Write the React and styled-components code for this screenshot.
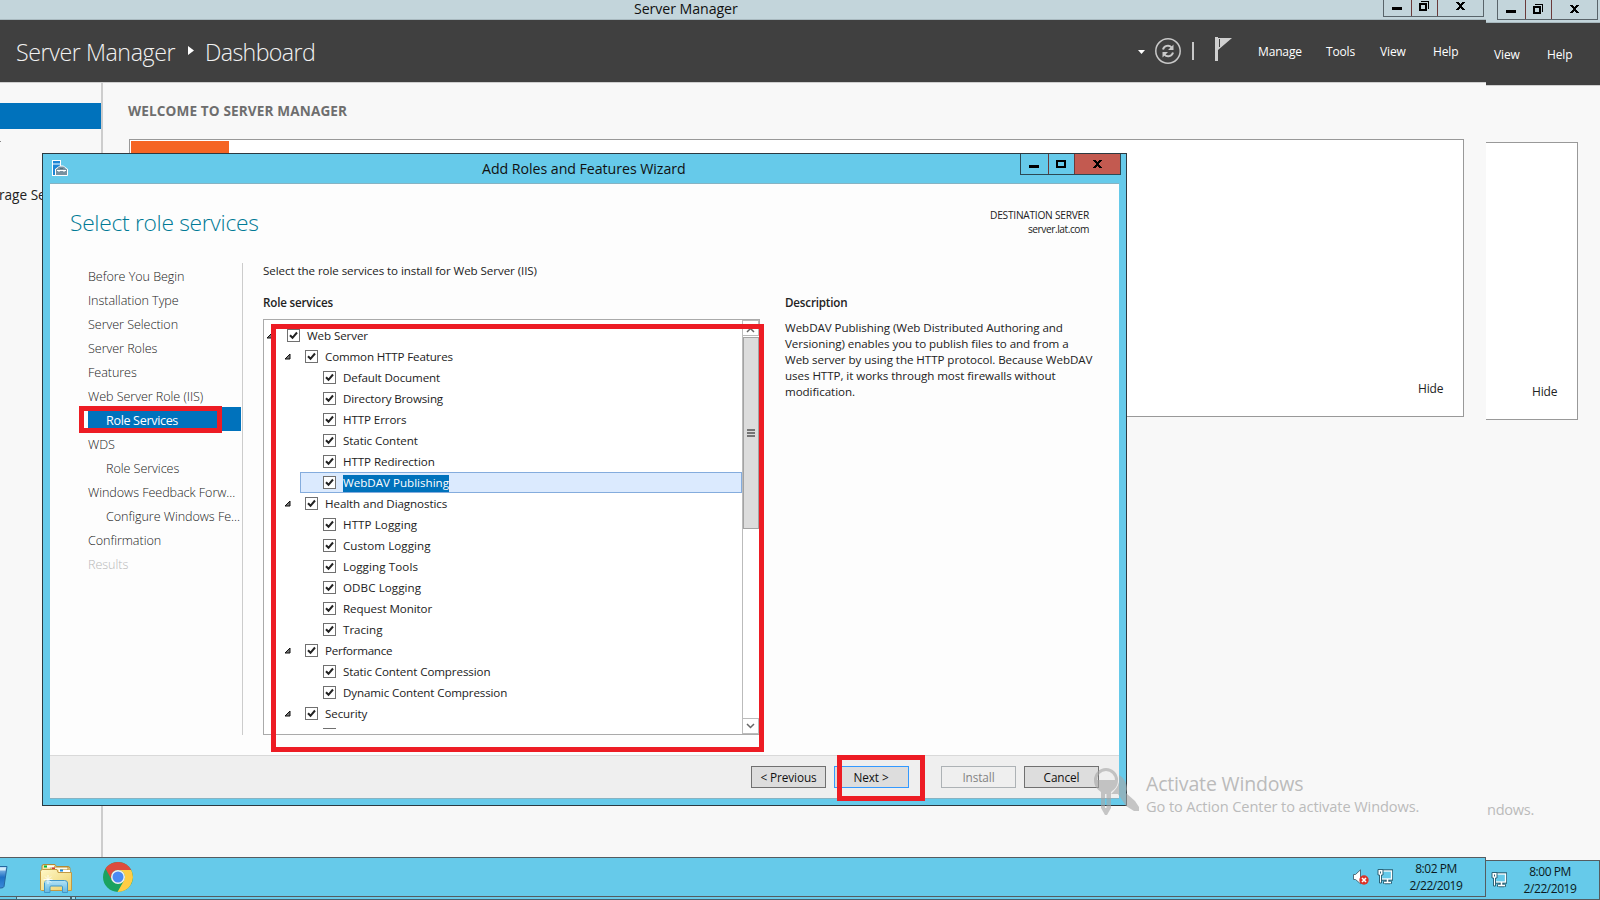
// src/pages/ServerManagerDesktop.jsx
import styled, { createGlobalStyle } from 'styled-components';

const GlobalStyle = createGlobalStyle`
  * {
    box-sizing: border-box;
  }
  body {
    margin: 0;
    overflow: hidden;
    font-family: 'Open Sans', 'Noto Sans', sans-serif;
    font-size: 11.6px;
    color: #222;
    white-space: nowrap;
  }
`;

const Desktop = styled.div`
  display: flex;
  width: 1600px;
  height: 900px;
  overflow: hidden;
  background: #f8f8f8;
`;

const FrontColumn = styled.div`
  display: flex;
  flex-direction: column;
  width: 1486px;
  height: 900px;
`;

const Screen = styled.div`
  display: flex;
  flex-direction: column;
  position: relative;
  width: ${(props) => props.$width}px;
  height: ${(props) => props.$height}px;
  overflow: hidden;
`;

const TitleBar = styled.div`
  display: flex;
  justify-content: flex-end;
  height: ${(props) => props.$height}px;
  padding-right: 2px;
  background: #c3d5db;
  border-bottom: 1px solid #a9b9bf;
`;

const TitleText = styled.div`
  flex: 1;
  padding-left: 634px;
  font-size: 14.2px;
  line-height: 17px;
  letter-spacing: -0.08px;
  color: #111;
`;

const CaptionButtons = styled.div`
  display: flex;
  height: ${(props) => props.$height}px;
  border: 1px solid ${(props) => props.$line};
  border-top: none;
`;

const CaptionButton = styled.div`
  display: flex;
  align-items: flex-end;
  justify-content: center;
  width: ${(props) => props.$width}px;
  padding-right: ${(props) => (props.$width < 40 ? 1 : 0)}px;
  padding-bottom: ${(props) => props.$pad}px;
  background: ${(props) => (props.$close ? '#c35a50' : 'transparent')};

  & + & {
    border-left: 1px solid ${(props) => props.$line};
  }
`;

const Header = styled.div`
  display: flex;
  align-items: center;
  height: 63px;
  background: #404040;
  border-bottom: 1px solid #cfcfcf;
  color: #fff;
`;

const Crumbs = styled.div`
  display: flex;
  align-items: center;
  flex: 1;
  padding-left: 16px;
  font-size: 23.2px;
  font-weight: 300;
  line-height: 60px;
  color: #f2f2f2;
`;

const Crumb = styled.span`
  width: ${(props) => props.$width}px;
  padding-top: 2px;
  letter-spacing: ${(props) => props.$spacing}px;
`;

const HeaderIcons = styled.div`
  display: flex;
  width: 120px;
  height: 62px;
`;

const MenuItem = styled.div`
  width: ${(props) => props.$width}px;
  padding-top: 1px;
  font-size: 12px;
  letter-spacing: -0.15px;
`;

const SliceMenu = styled.div`
  display: flex;
  padding-left: 8px;
`;

const Body = styled.div`
  display: flex;
  flex: 1;
`;

const Sidebar = styled.div`
  width: 103px;
  padding-top: 20px;
  border-right: 2px solid #cdcdcd;
`;

const SidebarCurrent = styled.div`
  height: 26px;
  background: #0072bc;
`;

const SidebarTick = styled.div`
  width: 1px;
  height: 1px;
  margin-top: 12px;
  background: #888;
`;

const SidebarItem = styled.div`
  margin: 43px 0 0 -1px;
  font-size: 13.6px;
  line-height: 20px;
`;

const Main = styled.div`
  flex: 1;
  padding: 18px 22px 0 26px;
`;

const Welcome = styled.div`
  height: 38px;
  margin-left: -1px;
  font-size: 13.6px;
  font-weight: 700;
  line-height: 20px;
  letter-spacing: 0.12px;
  color: #6e6e6e;
`;

const WelcomePanel = styled.div`
  display: flex;
  justify-content: space-between;
  height: 278px;
  padding: 1px 20px 0 1px;
  background: #fff;
  border: 1px solid #999;
`;

const OrangeTile = styled.div`
  width: 98px;
  height: 180px;
  background: #f56423;
`;

const HideLink = styled.div`
  align-self: flex-end;
  width: 25px;
  margin-bottom: 18px;
  font-size: 12px;
  line-height: 18px;
  letter-spacing: -0.15px;
`;

const SlicePanel = styled.div`
  display: flex;
  justify-content: flex-end;
  width: 92px;
  height: 278px;
  margin-top: 56px;
  padding-right: 20px;
  background: #fff;
  border: 1px solid #999;
  border-left: none;
`;

const SliceBody = styled.div`
  flex: 1;
`;

const Taskbar = styled.div`
  display: flex;
  align-items: flex-start;
  height: 40px;
  background: #66caea;
  border: 1px solid #555c60;
  border-left: none;
`;

const TaskIcons = styled.div`
  flex: 1;
  height: 38px;
`;

const TrayIcon = styled.div`
  width: ${(props) => props.$width}px;
  padding-top: 11px;
`;

const Clock = styled.div`
  width: 64px;
  margin-right: 17px;
  padding-top: 2px;
  font-size: 12px;
  line-height: 17px;
  letter-spacing: -0.45px;
  text-align: center;
  color: #0c1a20;
`;

const BottomStrip = styled.div`
  display: flex;
  height: 3px;
  padding-left: 16px;
  background: #66caea;
  border-bottom: 1px solid #46606b;
`;

const StripTask = styled.div`
  width: ${(props) => props.$width}px;
  height: 3px;
  background: #9adcf2;
  border: 1px solid #3f6572;
  border-top: none;
`;

// Windows activation notice, drawn over everything else on the screen
const Watermark = styled.div`
  position: absolute;
  left: 1092px;
  top: 766px;
  display: flex;
`;

const WatermarkText = styled.div`
  padding: 4px 0 0 7px;
  color: #bbb;
`;

const WatermarkTitle = styled.div`
  font-size: 19.5px;
  line-height: 27px;
  letter-spacing: -0.17px;
`;

const WatermarkLine = styled.div`
  font-size: 14.6px;
  line-height: 18px;
  letter-spacing: -0.1px;
`;

const SliceWatermark = styled(WatermarkLine)`
  position: absolute;
  left: 1px;
  top: 800px;
  letter-spacing: -0.3px;
  color: #bbb;
`;

const Wizard = styled.div`
  position: absolute;
  left: 42px;
  top: 153px;
  display: flex;
  flex-direction: column;
  width: 1085px;
  height: 653px;
  padding: 0 7px 6px;
  background: #66caea;
  border: 1px solid #2c3940;
`;

const WizardTitleBar = styled.div`
  display: flex;
  height: 29px;
  margin-right: -2px;
`;

const WizardTitle = styled.div`
  flex: 1;
  padding-left: 414px;
  font-size: 14.2px;
  line-height: 29px;
  letter-spacing: -0.05px;
  color: #111;
`;

const WizardIcon = styled.div`
  width: 16px;
  margin: 6px 0 0 2px;
`;

const WizardBody = styled.div`
  position: relative;
  display: flex;
  flex-direction: column;
  flex: 1;
  background: #fdfdfd;
  border-top: 1px solid #86b3c3;
  border-bottom: 1px solid #86b3c3;
`;

const WizardHeading = styled.div`
  display: flex;
  justify-content: space-between;
  height: 79px;
  padding: 19px 30px 0 20px;
`;

const PageTitle = styled.h1`
  margin: 0;
  font-size: 22.8px;
  font-weight: 300;
  line-height: 40px;
  letter-spacing: -0.3px;
  color: #007a96;
`;

const Destination = styled.div`
  padding-top: 6px;
  font-size: 10.2px;
  line-height: 13px;
  text-align: right;
  letter-spacing: -0.25px;
`;

const ServerName = styled.div`
  line-height: 14px;
  letter-spacing: -0.45px;
`;

const Columns = styled.div`
  display: flex;
  flex: 1;
`;

const Nav = styled.div`
  width: 193px;
  height: 472px;
  padding-left: 38px;
  border-right: 1px solid #ccc;
`;

const NavItem = styled.div`
  height: 24px;
  width: 153px;
  padding-left: ${(props) => (props.$nested ? 18 : 0)}px;
  font-size: 12.6px;
  font-weight: ${(props) => (props.$selected ? 400 : 300)};
  line-height: 27px;
  letter-spacing: ${(props) => (props.$selected ? -0.35 : -0.06)}px;
  color: ${(props) => {
    if (props.$selected) return '#fff';
    if (props.$disabled) return '#b8b8b8';
    return '#222';
  }};
  background: ${(props) => (props.$selected ? '#0072bc' : 'transparent')};
`;

const Picker = styled.div`
  width: 497px;
  margin-left: 20px;
`;

const Prompt = styled.div`
  height: 31px;
  line-height: 16px;
  letter-spacing: -0.08px;
`;

const SectionLabel = styled.div`
  height: 25px;
  font-weight: 600;
  line-height: 17px;
  letter-spacing: -0.17px;
`;

const TreeBox = styled.div`
  display: flex;
  width: 497px;
  height: 416px;
  background: #fff;
  border: 1px solid #aaa;
`;

const TreeView = styled.div`
  width: 478px;
  height: 404px;
  margin-top: 5px;
  overflow: hidden;
`;

const TreeRow = styled.div`
  display: flex;
  height: 21px;
  margin-left: ${(props) => props.$level * 18}px;
`;

const Expander = styled.div`
  width: 23px;
  padding: 7px 0 0 2px;

  svg {
    display: block;
  }
`;

const TreeLabel = styled.div`
  display: flex;
  flex: 1;
  height: 21px;
  padding-left: 23px;
  margin-left: -23px;
  background: ${(props) => (props.$selected ? '#dbeafe' : 'transparent')};
  box-shadow: ${(props) => (props.$selected ? 'inset 0 0 0 1px #84acdd' : 'none')};
`;

const CheckBox = styled.div`
  width: 13px;
  height: 13px;
  margin-top: 4px;
  background: #fff;
  border: 1px solid #707070;

  svg {
    display: block;
  }
`;

const TreeText = styled.span`
  height: 17px;
  margin: 3px 0 0 7px;
  line-height: 16px;
  letter-spacing: ${(props) => props.$spacing || 0}px;
  color: ${(props) => (props.$selected ? '#fff' : '#222')};
  background: ${(props) => (props.$selected ? '#0072bc' : 'transparent')};
`;

const ScrollBar = styled.div`
  display: flex;
  flex-direction: column;
  justify-content: space-between;
  width: 17px;
  border-left: 1px solid #bbb;
`;

const ScrollButton = styled.div`
  display: flex;
  align-items: center;
  justify-content: center;
  width: 16px;
  height: 16px;
  padding-top: ${(props) => (props.$up ? 3 : 0)}px;
  border: 1px solid #bbb;
  border-left: none;
`;

const ScrollThumb = styled.div`
  display: flex;
  flex-direction: column;
  align-items: center;
  justify-content: center;
  gap: 1px;
  width: 16px;
  height: 192px;
  margin: 1px 0 189px;
  background: #dcdcdc;
  border: 1px solid #a3a3a3;
`;

const Grip = styled.div`
  width: 8px;
  height: 2px;
  background: #757575;
`;

const Description = styled.div`
  margin-left: 25px;
  line-height: 16px;
`;

const DescriptionText = styled.div`
  padding-top: 1px;
  letter-spacing: -0.06px;
`;

const WizardFooter = styled.div`
  display: flex;
  height: 43px;
  padding: 10px 20px 0 0;
  justify-content: flex-end;
  gap: 8px;
  background: #efefef;
  border-top: 1px solid #d9d9d9;
`;

const PushButton = styled.button`
  width: 75px;
  height: 22px;
  padding: 0;
  font-family: inherit;
  font-size: 11.8px;
  line-height: 20px;
  letter-spacing: -0.1px;
  color: #111;
  background: #ddd;
  border: 1px solid #707070;
`;

const DefaultButton = styled(PushButton)`
  padding-right: 1px;
  border-color: #3399ff;
`;

const DisabledButton = styled(PushButton)`
  margin-left: 24px;
  color: #838383;
  background: #efefef;
  border-color: #adb2b5;
`;

// red callout laid over the wizard
const Callout = styled.div`
  position: absolute;
  left: ${(props) => props.$x}px;
  top: ${(props) => props.$y}px;
  width: ${(props) => props.$width}px;
  height: ${(props) => props.$height}px;
  border: 5px solid #ed1c24;
`;

const CalloutGap = styled.div`
  width: 4px;
  height: 100%;
  background: #fdfdfd;
`;

const navItems = [
  { label: 'Before You Begin' },
  { label: 'Installation Type' },
  { label: 'Server Selection' },
  { label: 'Server Roles' },
  { label: 'Features' },
  { label: 'Web Server Role (IIS)' },
  { label: 'Role Services', nested: true, selected: true },
  { label: 'WDS' },
  { label: 'Role Services', nested: true },
  { label: 'Windows Feedback Forw...' },
  { label: 'Configure Windows Fe...', nested: true },
  { label: 'Confirmation' },
  { label: 'Results', disabled: true },
];

const roleServices = [
  { label: 'Web Server', level: 0, spacing: -0.1 },
  { label: 'Common HTTP Features', level: 1, spacing: -0.16 },
  { label: 'Default Document', level: 2, spacing: -0.12 },
  { label: 'Directory Browsing', level: 2, spacing: -0.16 },
  { label: 'HTTP Errors', level: 2, spacing: -0.1 },
  { label: 'Static Content', level: 2, spacing: -0.08 },
  { label: 'HTTP Redirection', level: 2, spacing: -0.08 },
  { label: 'WebDAV Publishing', level: 2, selected: true },
  { label: 'Health and Diagnostics', level: 1, spacing: -0.09 },
  { label: 'HTTP Logging', level: 2, spacing: 0.08 },
  { label: 'Custom Logging', level: 2, spacing: 0.06 },
  { label: 'Logging Tools', level: 2, spacing: 0.1 },
  { label: 'ODBC Logging', level: 2, spacing: 0.08 },
  { label: 'Request Monitor', level: 2, spacing: -0.08 },
  { label: 'Tracing', level: 2 },
  { label: 'Performance', level: 1, spacing: -0.27 },
  { label: 'Static Content Compression', level: 2, spacing: -0.11 },
  { label: 'Dynamic Content Compression', level: 2, spacing: -0.13 },
  { label: 'Security', level: 1, spacing: -0.12 },
  { label: '', level: 2 },
];

function MinimizeIcon() {
  return (
    <svg width="10" height="3" shapeRendering="crispEdges">
      <rect width="10" height="3" fill="#000" />
    </svg>
  );
}

function MaximizeIcon() {
  return (
    <svg width="10" height="8" shapeRendering="crispEdges">
      <path d="M0 0h10v8H0zM2 2v4h6V2z" fill="#000" fillRule="evenodd" />
    </svg>
  );
}

function RestoreIcon() {
  return (
    <svg width="10" height="10" shapeRendering="crispEdges">
      <path d="M0 2h8v8H0zM2 4v4h4V4z" fill="#000" fillRule="evenodd" />
      <path d="M2 0h8v8H9V1H2z" fill="#000" />
    </svg>
  );
}

function CloseIcon() {
  return (
    <svg width="9" height="8" viewBox="0 0 9 8" shapeRendering="crispEdges">
      <path
        d="M0 0h3v1h1v1h1V1h1V0h3v1H8v1H7v1H6v2h1v1h1v1h1v1H6V7H5V6H4v1H3v1H0V7h1V6h1V5h1V3H2V2H1V1H0z"
        fill="#000"
      />
    </svg>
  );
}

function WindowCaption({ height }) {
  return (
    <CaptionButtons $height={height} $line="#59646a">
      <CaptionButton $width={27} $pad={6} $line="#59646a"><MinimizeIcon /></CaptionButton>
      <CaptionButton $width={26} $pad={5} $line="#59646a"><RestoreIcon /></CaptionButton>
      <CaptionButton $width={46} $pad={6} $line="#59646a"><CloseIcon /></CaptionButton>
    </CaptionButtons>
  );
}

function HeaderGlyphs() {
  return (
    <svg width="120" height="62" viewBox="0 0 120 62">
      <path d="M0 30h7L3.500 34z" fill="#fff" />
      <circle cx="30" cy="31" r="12.200" fill="none" stroke="#c8c8c8" strokeWidth="1.500" />
      <path d="M25 29.500c1-4 6-5 8.500-2.200M35 32.500c-1 4-6 5-8.500 2.200" fill="none" stroke="#c8c8c8" strokeWidth="2" />
      <path d="M35.500 24.500v5.500h-5.500zM24.500 37.500V32h5.500z" fill="#c8c8c8" />
      <rect x="54" y="22" width="2" height="18" fill="#c8c8c8" />
      <path d="M77 17h3v24h-3zM80 18h14L80 30z" fill="#d0d0d0" />
      <path d="M81.500 19v8" stroke="#404040" />
    </svg>
  );
}

function ServerIcon() {
  return (
    <svg width="16" height="16" viewBox="0 0 16 16">
      <rect x=".5" y=".5" width="8" height="15" fill="#1e86d6" stroke="#fff" />
      <path d="M1 4h7" stroke="#fff" />
      <path d="M3.500 15.500V9L6 7.500 7.500 6h4L13 7.500 15.500 9v6.500z" fill="#7891a0" stroke="#fff" />
      <path d="M5 10.500h9M7 10v2M12 10v2" stroke="#fff" />
      <path d="M8 8.500h3" stroke="#52707f" />
    </svg>
  );
}

function CheckMark() {
  return (
    <svg width="11" height="11" viewBox="0 0 11 11">
      <path d="M2 5.200L4.500 7.800 9 2.500" fill="none" stroke="#222" strokeWidth="2" />
    </svg>
  );
}

function ExpandedArrow() {
  return (
    <svg width="7" height="7" viewBox="0 0 7 7">
      <path d="M6 1v5H1z" fill="#777" stroke="#111" />
    </svg>
  );
}

function TaskbarIcons() {
  return (
    <svg width="140" height="38" viewBox="0 0 140 38">
      <defs>
        <linearGradient id="bin" x1="0" y1="0" x2="0" y2="1">
          <stop offset="0" stopColor="#a9d3f2" />
          <stop offset=".5" stopColor="#1e6fc4" />
          <stop offset="1" stopColor="#3b8bd8" />
        </linearGradient>
        <linearGradient id="folder" x1="0" y1="0" x2="1" y2="1">
          <stop offset="0" stopColor="#fff8c8" />
          <stop offset="1" stopColor="#ecd069" />
        </linearGradient>
        <linearGradient id="stand" x1="0" y1="0" x2="0" y2="1">
          <stop offset="0" stopColor="#b4e4f6" />
          <stop offset="1" stopColor="#63b7e2" />
        </linearGradient>
      </defs>
      <path d="M-6 8.500H7L4 28.500Q3.500 30 1 30h-7z" fill="url(#bin)" stroke="#2467a0" />
      <path d="M0 9.500h6l-.5 3H0z" fill="#d5ecfa" />
      <path d="M42 32V8q0-1.500 2-1.500h11l1.500 2H68q2 0 2 2V32z" fill="#f6e3a0" stroke="#b48a34" />
      <path d="M51 11V9h17v3h-8" fill="#fffbe8" stroke="#b48a34" />
      <rect x="44" y="7.500" width="3" height="2" fill="#00b73a" />
      <rect x="47" y="7.500" width="7" height="2" fill="#fff" />
      <rect x="52" y="9.500" width="3" height="2" fill="#d4382e" />
      <path d="M40.500 32V13.500q0-2 2-2H57l1 3h13.500V32.500h-30z" fill="url(#folder)" stroke="#c39a43" />
      <path d="M59 12h11v2H59z" fill="#fff" />
      <rect x="60" y="11.500" width="3" height="2" fill="#1e8ce0" />
      <path d="M44.500 34.500V25q0-2.500 3-2.500h17q3 0 3 2.500v9.500h-5V29q0-1-1-1H51q-1 0-1 1v5.500z" fill="url(#stand)" stroke="#4197c8" />
      <path d="M48 17v9M43.500 21.500h9M45 18.500l6 6M51 18.500l-6 6" stroke="#fff" strokeWidth=".8" />
      <circle cx="118" cy="19" r="15" fill="#1ba260" />
      <path d="M105.500 10.500A15 15 0 0 1 131.200 12H118a7 7 0 0 0-6 10.500z" fill="#dd4b3e" />
      <path d="M131.200 12A15 15 0 0 1 117.500 34L124 22.500A7 7 0 0 0 118 12z" fill="#ffcd46" />
      <circle cx="118" cy="19" r="7" fill="#f1f1f1" />
      <circle cx="118" cy="19" r="5.500" fill="#4a8af4" />
    </svg>
  );
}

function SpeakerIcon() {
  return (
    <svg width="16" height="16" viewBox="0 0 16 16">
      <path d="M.5 5.500h2L7.500.8v14L2.500 10.500h-2z" fill="#fff" stroke="#4e6d7a" />
      <circle cx="11" cy="11" r="4.700" fill="#dc3327" />
      <path d="M9 9l4 4M13 9l-4 4" stroke="#fff" strokeWidth="1.600" />
    </svg>
  );
}

function NetworkIcon() {
  return (
    <svg width="16" height="16" viewBox="0 0 16 16">
      <path d="M4.500 1.500h10.300v9h-10.300zM9 11h3v3H9zM6 13.500h9" fill="none" stroke="#2c6377" strokeWidth="2.400" />
      <rect x="4.500" y="2" width="10" height="8" fill="#66caea" stroke="#fff" strokeWidth="1.300" />
      <path d="M10.500 10v3M7 13.500h7" stroke="#fff" strokeWidth="1.500" />
      <path d="M1 .5h5v5.500H4.500v8h-2V6H1z" fill="#fff" stroke="#2c6377" />
      <path d="M3 2.500h1v2H3z" fill="#2c6377" />
    </svg>
  );
}

// two keys: one upright, one leaning behind it to the right
function KeysIcon() {
  return (
    <svg width="47" height="50" viewBox="0 0 47 50">
      <g fill="#a6a6a6" fillOpacity=".62">
        <path d="M27 9c5 3 8 8 8 14l-1 4 9 8 4 6v4h-5l-8-5-8-12h-7c4-4 7-7 8-12z" />
        <path
          d="M14 2a12 12 0 0 1 12 12c0 6-3 9-7 12v16l-4 7h-2l-4-7V26C5 23 2 20 2 14A12 12 0 0 1 14 2zM14 5a9 9 0 0 0-9 9h18a9 9 0 0 0-9-9zM13 28v14h1.500V28z"
          fillRule="evenodd"
        />
      </g>
    </svg>
  );
}

function TrayClock({ time }) {
  return (
    <Clock>
      <div>{time}</div>
      <div>2/22/2019</div>
    </Clock>
  );
}

function RoleTree() {
  return (
    <TreeBox>
      <TreeView>
        {roleServices.map((item, index) => (
          <TreeRow key={index} $level={item.level}>
            <Expander>{item.level < 2 && <ExpandedArrow />}</Expander>
            <TreeLabel $selected={item.selected}>
              <CheckBox><CheckMark /></CheckBox>
              <TreeText $selected={item.selected} $spacing={item.spacing}>{item.label}</TreeText>
            </TreeLabel>
          </TreeRow>
        ))}
      </TreeView>
      <ScrollBar>
        <ScrollButton $up>
          <svg width="9" height="6"><path d="M1 5l3.500-3.500L8 5" fill="none" stroke="#666" strokeWidth="1.500" /></svg>
        </ScrollButton>
        <ScrollThumb>
          <Grip />
          <Grip />
          <Grip />
        </ScrollThumb>
        <ScrollButton>
          <svg width="9" height="6"><path d="M1 1l3.500 3.500L8 1" fill="none" stroke="#666" strokeWidth="1.500" /></svg>
        </ScrollButton>
      </ScrollBar>
    </TreeBox>
  );
}

function RolesWizard() {
  return (
    <Wizard>
      <WizardTitleBar>
        <WizardIcon><ServerIcon /></WizardIcon>
        <WizardTitle>Add Roles and Features Wizard</WizardTitle>
        <CaptionButtons $height={21} $line="#2c4954">
          <CaptionButton $width={27} $pad={6} $line="#2c4954"><MinimizeIcon /></CaptionButton>
          <CaptionButton $width={26} $pad={6} $line="#2c4954"><MaximizeIcon /></CaptionButton>
          <CaptionButton $width={46} $pad={6} $line="#6b3a3a" $close><CloseIcon /></CaptionButton>
        </CaptionButtons>
      </WizardTitleBar>
      <WizardBody>
        <WizardHeading>
          <PageTitle>Select role services</PageTitle>
          <Destination>
            <div>DESTINATION SERVER</div>
            <ServerName>server.lat.com</ServerName>
          </Destination>
        </WizardHeading>
        <Columns>
          <Nav>
            {navItems.map((item, index) => (
              <NavItem
                key={index}
                $nested={item.nested}
                $selected={item.selected}
                $disabled={item.disabled}
              >
                {item.label}
              </NavItem>
            ))}
          </Nav>
          <Picker>
            <Prompt>Select the role services to install for Web Server (IIS)</Prompt>
            <SectionLabel>Role services</SectionLabel>
            <RoleTree />
          </Picker>
          <Description>
            <Prompt />
            <SectionLabel>Description</SectionLabel>
            <DescriptionText>
              WebDAV Publishing (Web Distributed Authoring and<br />
              Versioning) enables you to publish files to and from a<br />
              Web server by using the HTTP protocol. Because WebDAV<br />
              uses HTTP, it works through most firewalls without<br />
              modification.
            </DescriptionText>
          </Description>
        </Columns>
        <WizardFooter>
          <PushButton>&lt; Previous</PushButton>
          <DefaultButton>Next &gt;</DefaultButton>
          <DisabledButton disabled>Install</DisabledButton>
          <PushButton>Cancel</PushButton>
        </WizardFooter>
        <Callout $x={29} $y={222} $width={143} $height={27}><CalloutGap /></Callout>
        <Callout $x={221} $y={140} $width={493} $height={428} />
        <Callout $x={787} $y={571} $width={88} $height={46} />
      </WizardBody>
    </Wizard>
  );
}

function App() {
  return (
    <Desktop>
      <GlobalStyle />
      <FrontColumn>
        <Screen $width={1486} $height={897}>
          <TitleBar $height={20}>
            <TitleText>Server Manager</TitleText>
            <WindowCaption height={17} />
          </TitleBar>
          <Header>
            <Crumbs>
              <Crumb $width={172} $spacing={-0.42}>Server Manager</Crumb>
              <svg width="17" height="10"><path d="M0 0l6 4.500L0 9z" fill="#fff" /></svg>
              <Crumb $spacing={-0.62}>Dashboard</Crumb>
            </Crumbs>
            <HeaderIcons><HeaderGlyphs /></HeaderIcons>
            <MenuItem $width={68}>Manage</MenuItem>
            <MenuItem $width={54}>Tools</MenuItem>
            <MenuItem $width={53}>View</MenuItem>
            <MenuItem $width={53}>Help</MenuItem>
          </Header>
          <Body>
            <Sidebar>
              <SidebarCurrent />
              <SidebarTick />
              <SidebarItem>rage Se</SidebarItem>
            </Sidebar>
            <Main>
              <Welcome>WELCOME TO SERVER MANAGER</Welcome>
              <WelcomePanel>
                <OrangeTile />
                <HideLink>Hide</HideLink>
              </WelcomePanel>
            </Main>
          </Body>
          <Taskbar>
            <TaskIcons><TaskbarIcons /></TaskIcons>
            <TrayIcon $width={24}><SpeakerIcon /></TrayIcon>
            <TrayIcon $width={27}><NetworkIcon /></TrayIcon>
            <TrayClock time="8:02 PM" />
          </Taskbar>
          <RolesWizard />
          <Watermark>
            <KeysIcon />
            <WatermarkText>
              <WatermarkTitle>Activate Windows</WatermarkTitle>
              <WatermarkLine>Go to Action Center to activate Windows.</WatermarkLine>
            </WatermarkText>
          </Watermark>
        </Screen>
        <BottomStrip>
          <StripTask $width={55} />
          <StripTask $width={5} />
        </BottomStrip>
      </FrontColumn>
      <Screen $width={114} $height={900}>
        <TitleBar $height={23}>
          <WindowCaption height={20} />
        </TitleBar>
        <Header>
          <SliceMenu>
            <MenuItem $width={53}>View</MenuItem>
            <MenuItem $width={53}>Help</MenuItem>
          </SliceMenu>
        </Header>
        <SliceBody>
          <SlicePanel>
            <HideLink>Hide</HideLink>
          </SlicePanel>
        </SliceBody>
        <Taskbar>
          <TrayIcon $width={5} />
          <TrayIcon $width={27}><NetworkIcon /></TrayIcon>
          <TrayClock time="8:00 PM" />
        </Taskbar>
        <SliceWatermark>ndows.</SliceWatermark>
      </Screen>
    </Desktop>
  );
}

export default App;
